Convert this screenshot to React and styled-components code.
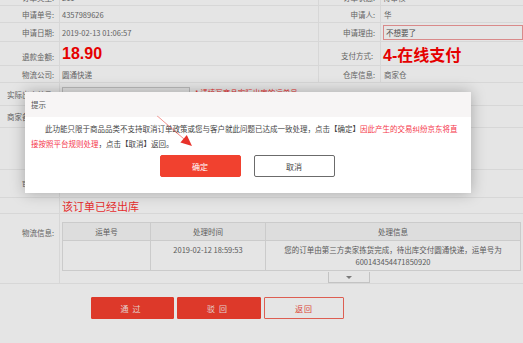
import React from 'react';
import styled, { createGlobalStyle } from 'styled-components';

const GlobalStyle = createGlobalStyle`
  html, body { margin: 0; padding: 0; }
  body {
    font-family: "Noto Sans CJK SC", "Noto Sans", sans-serif;
    background: #fff;
  }
`;

const Screen = styled.div`
  position: relative;
  width: 523px;
  height: 343px;
  overflow: hidden;
  background: #fff;
`;

const Page = styled.div`
  margin-top: -11px;
  font-size: 7.5px;
  color: #6e6e6e;
`;

const Row = styled.div`
  display: grid;
  grid-template-columns: ${p => (p.$pair ? '60px 258px 63px 1fr' : '60px 1fr')};
  height: ${p => p.$h}px;
  box-sizing: border-box;
  border-bottom: 1px solid #f0f0f0;
`;

const Label = styled.div`
  display: flex;
  justify-content: flex-end;
  align-items: ${p => (p.$top ? 'flex-start' : 'center')};
  padding: ${p => p.$pad || '0 5px 0 0'};
  border-right: 1px solid #f0f0f0;
  border-left: ${p => (p.$second ? '1px solid #f0f0f0' : 'none')};
  white-space: nowrap;
`;

const Value = styled.div`
  display: flex;
  align-items: ${p => (p.$top ? 'flex-start' : 'center')};
  padding: ${p => p.$pad || '0 0 0 2px'};
  gap: 5px;
  white-space: nowrap;
  min-width: 0;
`;

const Big = styled.span`
  font-family: "Liberation Sans", "Noto Sans CJK SC", sans-serif;
  font-size: 16px;
  font-weight: bold;
  color: #ff0000;
`;

const ReasonBox = styled.div`
  flex: 1;
  height: 15px;
  border: 1px solid #f29a9a;
  box-sizing: border-box;
  display: flex;
  align-items: center;
  padding-left: 2px;
  color: #555;
`;

const Input = styled.div`
  width: 128px;
  height: 16px;
  border: 1px solid #cfcfcf;
  box-sizing: border-box;
  background: #fafafa;
`;

const Hint = styled.span`
  color: #ff3030;
`;

const Shipped = styled.span`
  font-size: 11px;
  color: #ff3333;
`;

const Column = styled.div`
  display: flex;
  flex-direction: column;
`;

const Table = styled.div`
  width: 459px;
  display: grid;
  grid-template-columns: 87px 115px 1fr;
  border: 1px solid #e2e2e2;
  box-sizing: border-box;
  color: #666;
`;

const Th = styled.div`
  height: 18px;
  background: #f6f6f6;
  display: flex;
  align-items: center;
  justify-content: center;
  border-left: ${p => (p.$first ? 'none' : '1px solid #e2e2e2')};
  border-bottom: 1px solid #e2e2e2;
  box-sizing: border-box;
`;

const Td = styled.div`
  height: 29px;
  padding-top: 3px;
  box-sizing: border-box;
  text-align: center;
  line-height: 12px;
  border-left: ${p => (p.$first ? 'none' : '1px solid #e2e2e2')};
`;

const Toggle = styled.div`
  margin: 1px 0 0 266px;
  width: 42px;
  height: 11px;
  border: 1px solid #dadada;
  border-top: none;
  box-sizing: border-box;
  display: flex;
  align-items: center;
  justify-content: center;
  &::after {
    content: '';
    border-left: 3px solid transparent;
    border-right: 3px solid transparent;
    border-top: 3px solid #888;
  }
`;

const Actions = styled.div`
  display: flex;
  gap: 3px;
  padding: 13px 0 0 91px;
`;

const ActionButton = styled.div`
  width: ${p => p.$w}px;
  height: 22px;
  box-sizing: border-box;
  display: flex;
  align-items: center;
  justify-content: center;
  font-size: 8px;
  letter-spacing: ${p => (p.$spaced ? '4px' : '1px')};
  border-radius: 1px;
  background: ${p => (p.$outline ? '#fff' : '#f6402f')};
  border: 1px solid ${p => (p.$outline ? '#f7695c' : '#f6402f')};
  color: ${p => (p.$outline ? '#f5503f' : '#ffe6e3')};
`;

const Mask = styled.div`
  position: absolute;
  inset: 0;
  background: rgba(0, 0, 0, 0.1);
`;

const Dialog = styled.div`
  position: absolute;
  left: 25px;
  top: 92px;
  width: 446px;
  height: 101px;
  background: #fff;
  box-shadow: 0 0 14px rgba(0, 0, 0, 0.28);
  display: flex;
  flex-direction: column;
  font-size: 7.5px;
`;

const DialogTitle = styled.div`
  height: 25px;
  background: #f7f5f5;
  display: flex;
  align-items: center;
  padding-left: 6px;
  color: #555;
`;

const DialogText = styled.p`
  margin: 4px 0 0;
  width: 431px;
  padding-left: 6px;
  line-height: 15px;
  text-indent: 14px;
  color: #444;
`;

const Warn = styled.span`
  color: #f5364a;
`;

const DialogButtons = styled.div`
  display: flex;
  justify-content: center;
  gap: 13px;
  margin-top: 4px;
  padding-right: 2px;
`;

const DialogButton = styled.div`
  width: 81px;
  height: 22px;
  box-sizing: border-box;
  border-radius: 2px;
  display: flex;
  align-items: center;
  justify-content: center;
  font-size: 8px;
  background: ${p => (p.$primary ? '#f1412f' : '#fff')};
  border: 1px solid ${p => (p.$primary ? '#f1412f' : '#6b6b6b')};
  color: ${p => (p.$primary ? '#fff' : '#444')};
`;

const Arrow = styled.svg`
  position: absolute;
  left: 150px;
  top: 110px;
`;

export default function App() {
  return (
    <Screen>
      <GlobalStyle />
      <Page>
        <Row $pair $h={17}>
          <Label>订单类型:</Label>
          <Value>211</Value>
          <Label $second>订单状态:</Label>
          <Value>待审核</Value>
        </Row>
        <Row $pair $h={17}>
          <Label>申请单号:</Label>
          <Value>4357989626</Value>
          <Label $second>申请人:</Label>
          <Value $pad="0 0 0 3px">华</Value>
        </Row>
        <Row $pair $h={19}>
          <Label>申请日期:</Label>
          <Value>2019-02-13 01:06:57</Value>
          <Label $second>申请理由:</Label>
          <Value $pad="0 0 0 2px">
            <ReasonBox>不想要了</ReasonBox>
          </Value>
        </Row>
        <Row $pair $h={24}>
          <Label $pad="5px 5px 0 0">退款金额:</Label>
          <Value>
            <Big>18.90</Big>
          </Value>
          <Label $second $pad="3px 7px 0 0">支付方式:</Label>
          <Value $pad="0 0 0 2px">
            <Big>4-在线支付</Big>
          </Value>
        </Row>
        <Row $pair $h={17}>
          <Label>物流公司:</Label>
          <Value>圆通快递</Value>
          <Label $second>仓库信息:</Label>
          <Value $pad="0 0 0 3px">商家仓</Value>
        </Row>
        <Row $h={23}>
          <Label $top $pad="6px 5px 0 0">实际出库单号:</Label>
          <Value $top $pad="4px 0 0 2px">
            <Input />
            <Hint>* 请填写商品实际出库的运单号</Hint>
          </Value>
        </Row>
        <Row $h={22}>
          <Label>商家备注信息:</Label>
          <Value />
        </Row>
        <Row $h={42}>
          <Label>备注:</Label>
          <Value />
        </Row>
        <Row $h={28}>
          <Label>审核意见:</Label>
          <Value />
        </Row>
        <Row $h={16}>
          <Label />
          <Value>
            <Shipped>该订单已经出库</Shipped>
          </Value>
        </Row>
        <Row $h={70}>
          <Label $top $pad="13px 5px 0 0">物流信息:</Label>
          <Value $top $pad="8px 0 0 2px">
            <Column>
              <Table>
                <Th $first>运单号</Th>
                <Th>处理时间</Th>
                <Th>处理信息</Th>
                <Td $first />
                <Td>2019-02-12 18:59:53</Td>
                <Td>
                  您的订单由第三方卖家拣货完成，待出库交付圆通快递，运单号为
                  <br />
                  600143454471850920
                </Td>
              </Table>
              <Toggle />
            </Column>
          </Value>
        </Row>
        <Actions>
          <ActionButton $w={83} $spaced>通过</ActionButton>
          <ActionButton $w={84} $spaced>驳回</ActionButton>
          <ActionButton $w={80} $outline>返回</ActionButton>
        </Actions>
      </Page>
      <Mask />
      <Dialog>
        <DialogTitle>提示</DialogTitle>
        <DialogText>
          此功能只限于商品品类不支持取消订单政策或您与客户就此问题已达成一致处理，点击【确定】
          <Warn>因此产生的交易纠纷京东将直接按照平台规则处理</Warn>
          ，点击【取消】返回。
        </DialogText>
        <DialogButtons>
          <DialogButton $primary>确定</DialogButton>
          <DialogButton>取消</DialogButton>
        </DialogButtons>
      </Dialog>
      <Arrow width="50" height="45" viewBox="0 0 50 45">
        <polygon points="7,5.6 7.6,6.4 34.8,30 33.2,28" fill="#e8322a" />
        <polygon points="42,36 30.4,32.4 36.8,25" fill="#e8322a" />
      </Arrow>
    </Screen>
  );
}
